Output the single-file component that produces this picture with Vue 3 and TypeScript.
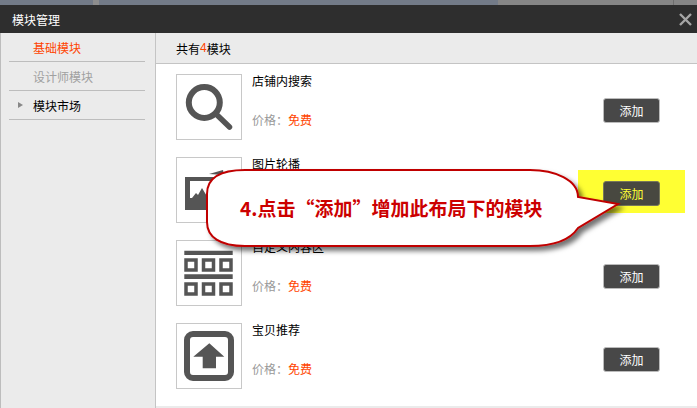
<script setup lang="ts">
interface Mod { name: string; icon: string }
const mods: Mod[] = [
  { name: '店铺内搜索', icon: 'search' },
  { name: '图片轮播', icon: 'image' },
  { name: '自定义内容区', icon: 'grid' },
  { name: '宝贝推荐', icon: 'up' }
]
</script>

<template>
  <div class="page">
    <div class="strip">
      <span class="s1"></span><span class="s2"></span><span class="s3"></span><span class="s4"></span><span class="s5"></span>
    </div>
    <div class="titlebar">
      <span class="title">模块管理</span>
      <svg class="close" width="13" height="13" viewBox="0 0 13 13"><path d="M1 1L12 12M12 1L1 12" stroke="#a5a5a5" stroke-width="2.4" /></svg>
    </div>
    <div class="body">
      <aside class="side">
        <div class="item active">基础模块</div>
        <div class="item muted">设计师模块</div>
        <div class="item market"><i class="arrow"></i>模块市场</div>
      </aside>
      <main class="main">
        <div class="head">共有<b class="n">4</b>模块</div>
        <div class="list">
          <div v-for="m in mods" :key="m.name" class="row">
            <div class="thumb">
              <svg v-if="m.icon === 'search'" width="64" height="64" viewBox="0 0 64 64">
                <circle cx="27.300" cy="27.500" r="15.500" fill="none" stroke="#555" stroke-width="6" />
                <path d="M39 39L52.500 52" stroke="#555" stroke-width="5.500" stroke-linecap="round" />
              </svg>
              <svg v-else-if="m.icon === 'image'" width="64" height="64" viewBox="0 0 64 64">
                <path d="M8 19H50V52H8Z" fill="#555" />
                <path d="M13 23H45V40H13Z" fill="#fff" />
                <path d="M15 40L19 35L21 37L25 30L31 40Z" fill="#555" />
                <path d="M32 16L46 12L47 17Z" fill="#555" />
              </svg>
              <svg v-else-if="m.icon === 'grid'" width="64" height="64" viewBox="0 0 64 64">
                <path d="M7.300 9.700H55.700V14H7.300ZM7.300 33.300H55.700V38H7.300Z" fill="#555" />
                <g fill="none" stroke="#555" stroke-width="3.500">
                  <rect x="9" y="19" width="10" height="10" /><rect x="26.500" y="19" width="10" height="10" /><rect x="44" y="19" width="10" height="10" />
                  <rect x="9" y="43" width="10" height="10" /><rect x="26.500" y="43" width="10" height="10" /><rect x="44" y="43" width="10" height="10" />
                </g>
              </svg>
              <svg v-else width="64" height="64" viewBox="0 0 64 64">
                <rect x="10" y="10" width="44" height="44" rx="6" fill="none" stroke="#555" stroke-width="6" />
                <path d="M32.300 19.300L47.300 32.700H39V44.300H25.700V32.700H16.300Z" fill="#555" />
              </svg>
            </div>
            <div class="info">
              <div class="name">{{ m.name }}</div>
              <div class="price">价格：<span class="free">免费</span></div>
            </div>
            <div class="action" :class="{ hl: m.icon === 'image' }">
              <button class="add" type="button">添加</button>
            </div>
          </div>
        </div>
        <div class="foot"></div>
      </main>
    </div>

    <div class="callout">
      <svg class="bubble" width="697" height="408" viewBox="0 0 697 408">
        <defs>
          <filter id="sh" x="-10%" y="-10%" width="125%" height="130%">
            <feDropShadow dx="4" dy="4" stdDeviation="2.500" flood-color="#000" flood-opacity="0.55" />
          </filter>
        </defs>
        <path d="M245 170H530C555 170 578 180 578 197L618 204L578 228C570 240 555 246 530 246H245C220 246 207 237 207 222V194C207 178 220 170 245 170Z" fill="#fff" stroke="#c00000" stroke-width="2" filter="url(#sh)" />
      </svg>
      <span class="say">4.点击“添加”增加此布局下的模块</span>
    </div>
  </div>
</template>

<style scoped>
.page { position: relative; width: 697px; height: 408px; overflow: hidden; display: flex; flex-direction: column; background: #fff; font-family: "Liberation Sans", "Noto Sans CJK SC", sans-serif; font-size: 12px; color: #000; }
.strip { height: 5px; display: flex; background: #737b88; }
.s1 { width: 93px; }
.s2 { width: 6px; background: #8d8d8d; }
.s3 { width: 399px; }
.s4 { width: 175px; background: #868686; }
.s5 { flex: 1; background: #868686; border-left: 1px solid #6e6e6e; }
.titlebar { height: 28px; background: #2e2e2e; color: #fff; display: flex; align-items: center; justify-content: space-between; padding: 0 5px 0 12px; }
.title { font-size: 12px; }
.body { flex: 1; display: flex; min-height: 0; }
.side { width: 136px; background: #ebebeb; border-left: 1px solid #bdbdbd; border-right: 1px solid #c4c4c4; padding: 0 10px 0 8px; flex: none; }
.item { height: 28px; border-bottom: 1px solid #bdbdbd; display: flex; align-items: center; padding-left: 24px; position: relative; }
.active { color: #ff4400; }
.muted { color: #a0a0a0; }
.arrow { position: absolute; left: 9px; top: 11px; border-left: 5px solid #888; border-top: 3.500px solid transparent; border-bottom: 3.500px solid transparent; }
.main { flex: 1; display: flex; flex-direction: column; min-width: 0; }
.head { height: 30px; background: #ebebeb; border-bottom: 1px solid #c4c4c4; display: flex; align-items: center; padding-left: 20px; flex: none; }
.n { color: #ff4400; font-weight: normal; }
.list { flex: 1; padding: 10px 0 0 20px; display: flex; flex-direction: column; gap: 17px; }
.row { display: flex; height: 66px; }
.thumb { width: 64px; height: 64px; border: 1px solid #c8c8c8; flex: none; }
.thumb svg { display: block; }
.info { margin-left: 10px; flex: 1; display: flex; flex-direction: column; justify-content: space-between; padding-bottom: 11px; }
.name { line-height: 16px; }
.price { color: #999; line-height: 16px; }
.free { color: #ff4400; }
.action { width: 107px; height: 43px; margin: 13px 12px 0 0; display: flex; align-items: flex-start; padding: 11px 0 0 25px; box-sizing: border-box; }
.hl { background: #ffff33; }
.add { width: 57px; height: 25px; border: 1px solid #bbb; border-radius: 3px; background: #484848; color: #fff; font: inherit; padding: 0; }
.hl .add { background: #484840; color: #ffff33; border-color: #77775a; }
.foot { height: 2px; background: #ebebeb; flex: none; }
.callout { position: absolute; inset: 0; pointer-events: none; }
.bubble { position: absolute; left: 0; top: 0; }
.say { position: absolute; left: 240px; top: 196px; font-family: "Noto Sans CJK SC", sans-serif; font-size: 19px; line-height: 24px; font-weight: 700; color: #cc0000; white-space: nowrap; }
</style>
